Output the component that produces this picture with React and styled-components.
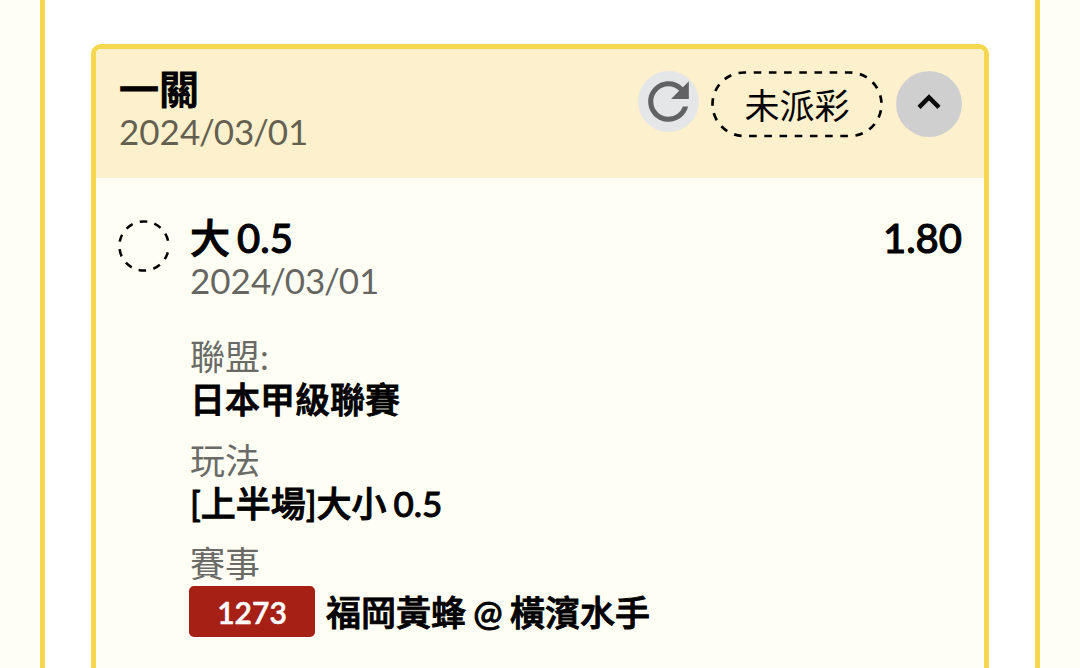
import React from "react"
import styled, { createGlobalStyle } from "styled-components"
import { MdRefresh } from "react-icons/md"

const GlobalStyle = createGlobalStyle`
  * {
    box-sizing: border-box;
  }

  body {
    margin: 0;
    overflow: hidden;
    background: #fefef4;
    color: #000;
    font-family: Lato, "Noto Sans CJK TC", sans-serif;
  }
`

const legs = [
  {
    pick: "大 0.5",
    date: "2024/03/01",
    odds: "1.80",
    league: "日本甲級聯賽",
    play: "[上半場]大小 0.5",
    code: "1273",
    match: "福岡黃蜂 @ 橫濱水手",
  },
]

// nine even gaps, the last one is wider where the ring closes
const ringDashes = `${"17.5 17.5 ".repeat(9)}17.5 27.5`

const TicketDate = ({ value }) => {
  const [year, month, day] = value.split("/")
  return (
    <DateText>
      {year}<Slash>/</Slash>{month}<Slash>/</Slash>{day}
    </DateText>
  )
}

const Ticket = ({ title, date, status }) => (
  <Card>
    <CardHeader>
      <div>
        <Title>{title}</Title>
        <TicketDate value={date} />
      </div>
      <Actions>
        <RefreshButton aria-label="refresh">
          <MdRefresh size={61} />
        </RefreshButton>
        <Status>
          <StatusOutline viewBox="0 0 172 67">
            <rect x="1.5" y="1.5" width="169" height="63.5" rx="31.7" pathLength="54" />
          </StatusOutline>
          {status}
        </Status>
        <ToggleButton aria-label="collapse">
          <svg width="24" height="17" viewBox="0 0 24 17">
            <path d="M2 14.4 12 4.4l10 10" />
          </svg>
        </ToggleButton>
      </Actions>
    </CardHeader>
    {legs.map(leg => (
      <Leg key={leg.code}>
        <Ring viewBox="0 0 52 52">
          <circle cx="26" cy="26" r="24.6" pathLength="360" transform="rotate(15 26 26)" />
        </Ring>
        <LegBody>
          <LegTop>
            <Title as="h3">{leg.pick}</Title>
            <Title as="span">{leg.odds}</Title>
          </LegTop>
          <TicketDate value={leg.date} />
          <Details>
            <Label>聯盟:</Label>
            <Value>{leg.league}</Value>
            <Label>玩法</Label>
            <Value>{leg.play}</Value>
            <Label>賽事</Label>
            <MatchRow>
              <Code>{leg.code}</Code>
              <Match>{leg.match}</Match>
            </MatchRow>
          </Details>
        </LegBody>
      </Leg>
    ))}
  </Card>
)

const App = () => (
  <Page>
    <GlobalStyle />
    <Panel>
      <Ticket title="一關" date="2024/03/01" status="未派彩" />
    </Panel>
  </Page>
)

const Page = styled.div`
  height: 668px;
  padding: 0 40px;
  overflow: hidden;
`

const Panel = styled.main`
  height: 720px;
  padding: 44px 46px 0;
  background: #fff;
  border: solid #f6d750;
  border-width: 0 5px;
`

const Card = styled.section`
  height: 720px;
  background: #fefef4;
  border: 5px solid #f6d750;
  border-radius: 10px;
  overflow: hidden;
`

const CardHeader = styled.header`
  display: flex;
  justify-content: space-between;
  height: 129px;
  padding: 19px 22px 0 23px;
  background: #fdf1cd;
`

const Title = styled.h2`
  margin: 0;
  font-size: 40px;
  font-weight: 500;
  line-height: 42px;
  word-spacing: -3px;
  -webkit-text-stroke: 1px currentColor;
`

const DateText = styled.div`
  color: #000;
  opacity: 0.6;
  font-size: 35px;
  line-height: 42px;
`

const Slash = styled.span`
  margin: 0 -1.2px;
`

const Actions = styled.div`
  display: flex;
  align-items: flex-start;
  padding-top: 3px;
`

const RoundButton = styled.button`
  display: flex;
  align-items: center;
  justify-content: center;
  padding: 0;
  border: 0;
  border-radius: 50%;
`

const RefreshButton = styled(RoundButton)`
  width: 61px;
  height: 61px;
  margin-right: 12px;
  background: #e5e6e8;
  color: #616264;
`

const ToggleButton = styled(RoundButton)`
  width: 66px;
  height: 66px;
  padding-bottom: 5px;
  background: #cfcfcf;

  path {
    fill: none;
    stroke: #0c0c0c;
    stroke-width: 4.4;
  }
`

const Status = styled.div`
  position: relative;
  width: 172px;
  height: 67px;
  margin-right: 13px;
  font-size: 35px;
  line-height: 69px;
  text-align: center;
`

const StatusOutline = styled.svg`
  position: absolute;
  inset: 0;
  fill: none;
  stroke: #000;
  stroke-width: 2.7;
  stroke-dasharray: 1 1;
  stroke-dashoffset: 0.75;
`

const Leg = styled.article`
  display: flex;
  padding: 39px 22px 0 21px;
`

const Ring = styled.svg`
  flex: none;
  width: 52px;
  height: 52px;
  margin: 3px 20px 0 1px;
  fill: none;
  stroke: #000;
  stroke-width: 2.5;
  stroke-dasharray: ${ringDashes};
`

const LegBody = styled.div`
  flex: 1;
`

const LegTop = styled.div`
  display: flex;
  justify-content: space-between;
`

const Details = styled.div`
  padding-top: 34px;
`

const Label = styled.div`
  color: #6a6a66;
  font-size: 35px;
  line-height: 43px;
`

const Value = styled.div`
  margin-bottom: 17.5px;
  font-size: 35px;
  font-weight: 500;
  line-height: 43px;
  word-spacing: -2px;
  -webkit-text-stroke: 0.9px currentColor;
`

const MatchRow = styled.div`
  display: flex;
  align-items: center;
  padding-top: 1px;
`

const Code = styled.span`
  width: 126px;
  height: 51px;
  margin: 0 11px 0 -1px;
  border-radius: 5px;
  background: #a62016;
  color: #fff;
  font-size: 30px;
  font-weight: 600;
  line-height: 52px;
  text-align: center;
  -webkit-text-stroke: 0.5px currentColor;
`

const Match = styled(Value)`
  margin: 2px 0 0;
  word-spacing: -1.5px;
`

export default App
